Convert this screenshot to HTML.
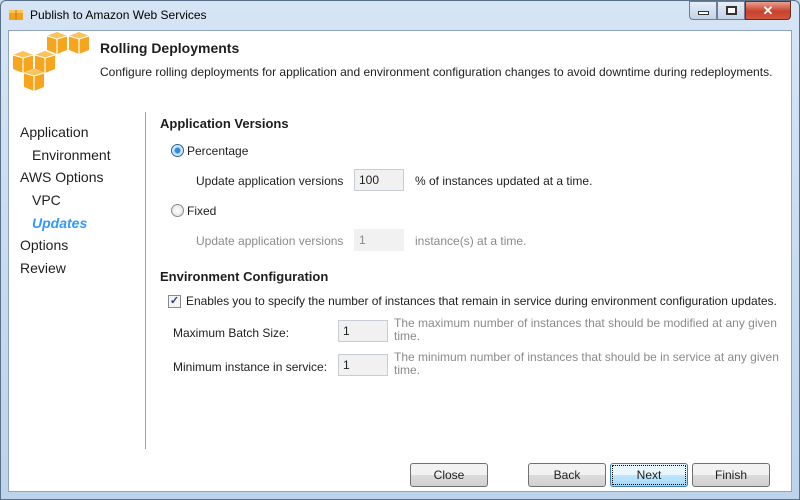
<!DOCTYPE html>
<html><head><style>
*{margin:0;padding:0;box-sizing:border-box}
body{width:800px;height:500px;overflow:hidden;font-family:"Liberation Sans",sans-serif;font-size:12px;color:#1e1e1e;background:#c9dcef}
.frame{position:absolute;left:0;top:0;width:800px;height:500px;background:linear-gradient(#d6e5f5,#bcd3ea);border:1px solid #5a6f88;border-radius:6px 6px 0 0}
.title{position:absolute;left:30px;top:8px;font-size:12px;color:#000}
.inner{position:absolute;left:8px;top:30px;width:784px;height:462px;background:#fff;border:1px solid #8fa4bd}
.a{position:absolute;white-space:nowrap}
.in{position:absolute;height:22px;background:#f1f1f1;border:1px solid #c8cdd4;padding:3px 4px;font-size:12px}
.btn{position:absolute;top:463px;width:78px;height:24px;border:1px solid #707070;border-radius:3px;background:linear-gradient(#f2f2f2 50%,#dcdcdc 50%,#d0d0d0);text-align:center;line-height:22px}
.g{color:#8a8a8a}
.radio{position:absolute;width:13px;height:13px;border-radius:50%;border:1px solid #8a8a8a;background:radial-gradient(#fff,#ddd)}
</style></head><body>
<div class="frame"></div>
<svg class="a" style="left:8px;top:6px" width="16" height="16"><rect x="1" y="4" width="14" height="10" fill="#f0a21c"/><rect x="1" y="4" width="14" height="3" fill="#f9c55a"/><line x1="8" y1="4" x2="8" y2="14" stroke="#c77b08"/></svg>
<div class="title">Publish to Amazon Web Services</div>
<div class="a" style="left:689px;top:1px;width:28px;height:19px;border:1px solid #6d7d93;border-radius:0 0 0 4px;background:linear-gradient(#e6eef8,#c2d2e6)"><div style="position:absolute;left:8px;top:9px;width:11px;height:4px;border:1px solid #333;background:#fff"></div></div>
<div class="a" style="left:717px;top:1px;width:28px;height:19px;border:1px solid #6d7d93;background:linear-gradient(#e6eef8,#c2d2e6)"><div style="position:absolute;left:8px;top:4px;width:11px;height:9px;border:2px solid #333;background:#fff"></div></div>
<div class="a" style="left:745px;top:1px;width:46px;height:19px;border:1px solid #6b2b20;border-radius:0 0 4px 0;background:linear-gradient(#e8a090,#c7412b 55%,#d2563e);color:#fff;font-weight:bold;text-align:center;font-size:13px;line-height:17px">✕</div>
<div class="inner"></div>
<svg class="a" style="left:0;top:0" width="100" height="95">
<defs><g id="c"><path d="M0 4 L10 0 L20 4 L20 18 L10 22 L0 18Z" fill="#f7a51c"/><path d="M0 4 L10 0 L20 4 L10 7Z" fill="#fbc35c"/><path d="M10 7 L10 22" stroke="#fff" stroke-width="1.2"/><path d="M0 4 L10 7 L20 4" stroke="#fff" stroke-width="1" fill="none"/></g></defs>
<use href="#c" x="47" y="32"/><use href="#c" x="69" y="32"/>
<use href="#c" x="13" y="51"/><use href="#c" x="35" y="51"/>
<use href="#c" x="24" y="69"/>
</svg>
<div class="a" style="left:100px;top:40px;font-size:14px;font-weight:bold">Rolling Deployments</div>
<div class="a" style="left:100px;top:65px">Configure rolling deployments for application and environment configuration changes to avoid downtime during redeployments.</div>
<div class="a" style="left:145px;top:112px;width:1px;height:337px;background:#a0a0a0"></div>
<div class="a" style="left:20px;top:124px;font-size:14px">Application</div>
<div class="a" style="left:32px;top:147px;font-size:14px">Environment</div>
<div class="a" style="left:20px;top:169px;font-size:14px">AWS Options</div>
<div class="a" style="left:32px;top:192px;font-size:14px">VPC</div>
<div class="a" style="left:32px;top:215px;font-size:14px;color:#3399ff;font-weight:bold;font-style:italic">Updates</div>
<div class="a" style="left:20px;top:237px;font-size:14px">Options</div>
<div class="a" style="left:20px;top:260px;font-size:14px">Review</div>
<div class="a" style="left:160px;top:116px;font-weight:bold;font-size:13px">Application Versions</div>
<div class="radio" style="left:171px;top:144px;background:radial-gradient(#2a8be0 30%,#bfe0f8 45%,#fff);border-color:#2c628b"></div>
<div class="a" style="left:187px;top:144px">Percentage</div>
<div class="a" style="left:196px;top:174px">Update application versions</div>
<div class="in" style="left:354px;top:169px;width:50px">100</div>
<div class="a" style="left:415px;top:174px">% of instances updated at a time.</div>
<div class="radio" style="left:171px;top:204px"></div>
<div class="a" style="left:187px;top:204px">Fixed</div>
<div class="a g" style="left:196px;top:234px">Update application versions</div>
<div class="in g" style="left:354px;top:229px;width:50px;border-color:#f1f1f1">1</div>
<div class="a g" style="left:415px;top:234px">instance(s) at a time.</div>
<div class="a" style="left:160px;top:269px;font-weight:bold;font-size:13px">Environment Configuration</div>
<div class="a" style="left:168px;top:295px;width:13px;height:13px;border:1px solid #8a8a8a;background:#f4f4f4;font-size:11px;line-height:11px;text-align:center;color:#2a3a8a;font-weight:bold">✓</div>
<div class="a" style="left:186px;top:294px;letter-spacing:-0.05px">Enables you to specify the number of instances that remain in service during environment configuration updates.</div>
<div class="a" style="left:173px;top:326px">Maximum Batch Size:</div>
<div class="in" style="left:338px;top:320px;width:50px">1</div>
<div class="a g" style="left:394px;top:317px;line-height:13px">The maximum number of instances that should be modified at any given<br>time.</div>
<div class="a" style="left:173px;top:360px">Minimum instance in service:</div>
<div class="in" style="left:338px;top:354px;width:50px">1</div>
<div class="a g" style="left:394px;top:351px;line-height:13px">The minimum number of instances that should be in service at any given<br>time.</div>
<div class="btn" style="left:410px">Close</div>
<div class="btn" style="left:528px">Back</div>
<div class="btn" style="left:610px;border-color:#3c7fb1;background:linear-gradient(#eaf6fd 50%,#bee6fd 50%,#a7d9f5);outline:1px dotted #000;outline-offset:-3px">Next</div>
<div class="btn" style="left:692px">Finish</div>
</body></html>
